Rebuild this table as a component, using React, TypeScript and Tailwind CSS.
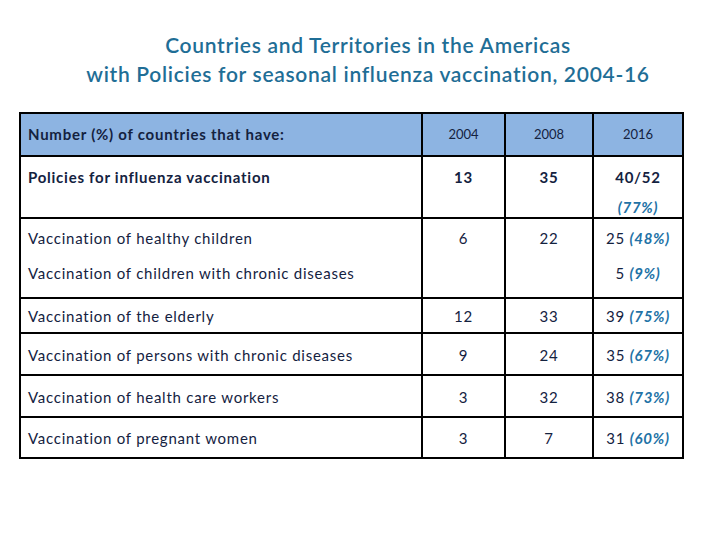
import React from "react";

const cell = "border-r-2 border-b-2 border-black";
const pct = "font-bold italic text-[#2272a6]";

export default function App() {
  return (
    <div className="w-[720px] h-[540px] bg-white text-[#14223f]" style={{ fontFamily: "Lato, 'Open Sans', sans-serif" }}>
      <div className="pt-[30px] pl-4 text-center text-[21px] leading-[29px] tracking-[0.7px] text-[#1f6e96] font-semibold">
        <div>Countries and Territories in the Americas</div>
        <div>with Policies for seasonal influenza vaccination, 2004-16</div>
      </div>
      <div className="mt-[24px] ml-[19px] w-fit border-l-2 border-t-2 border-black grid grid-cols-[402px_83px_88px_90px] grid-rows-[43px_62px_80px_35px_42px_42px_41px] text-[15px] tracking-[0.75px]">
        {/* header */}
        <div className={`${cell} bg-[#8db4e2] flex items-center pl-[7px] font-bold whitespace-nowrap`}>Number (%) of countries that have:</div>
        <div className={`${cell} bg-[#8db4e2] flex items-center justify-center text-[13px] tracking-normal`}>2004</div>
        <div className={`${cell} bg-[#8db4e2] flex items-center justify-center text-[13px] tracking-normal`}>2008</div>
        <div className={`${cell} bg-[#8db4e2] flex items-center justify-center text-[13px] tracking-normal`}>2016</div>

        {/* row 1 */}
        <div className={`${cell} pl-[7px] pt-[5px] leading-[30px] font-bold whitespace-nowrap`}>Policies for influenza vaccination</div>
        <div className={`${cell} pt-[5px] leading-[30px] text-center font-bold`}>13</div>
        <div className={`${cell} pt-[5px] leading-[30px] text-center font-bold`}>35</div>
        <div className={`${cell} pt-[5px] leading-[30px] text-center font-bold`}>
          <div>40/52</div>
          <div className={pct}>(77%)</div>
        </div>

        {/* row 2 */}
        <div className={`${cell} pl-[7px] pt-[2px] leading-[35px]`}>
          <div className="whitespace-nowrap">Vaccination of healthy children</div>
          <div className="whitespace-nowrap">Vaccination of children with chronic diseases</div>
        </div>
        <div className={`${cell} pt-[2px] leading-[35px] text-center`}>6</div>
        <div className={`${cell} pt-[2px] leading-[35px] text-center`}>22</div>
        <div className={`${cell} pt-[2px] leading-[35px] text-center whitespace-nowrap`}>
          <div>25 <span className={pct}>(48%)</span></div>
          <div>5 <span className={pct}>(9%)</span></div>
        </div>

        {[
          ["Vaccination of the elderly", "12", "33", "39", "(75%)"],
          ["Vaccination of persons with chronic diseases", "9", "24", "35", "(67%)"],
          ["Vaccination of health care workers", "3", "32", "38", "(73%)"],
          ["Vaccination of pregnant women", "3", "7", "31", "(60%)"],
        ].map((r) => (
          <React.Fragment key={r[0]}>
            <div className={`${cell} pl-[7px] flex items-center pt-[2px] whitespace-nowrap`}>{r[0]}</div>
            <div className={`${cell} flex items-center justify-center pt-[2px]`}>{r[1]}</div>
            <div className={`${cell} flex items-center justify-center pt-[2px]`}>{r[2]}</div>
            <div className={`${cell} flex items-center justify-center pt-[2px] whitespace-nowrap`}>
              <span>{r[3]} <span className={pct}>{r[4]}</span></span>
            </div>
          </React.Fragment>
        ))}
      </div>
    </div>
  );
}
